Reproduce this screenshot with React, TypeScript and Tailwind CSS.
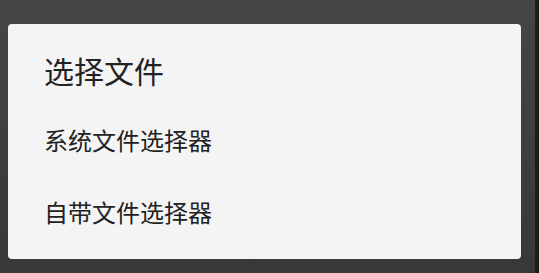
export default function App() {
  const font = { fontFamily: '"Noto Sans CJK SC", "Noto Sans", sans-serif' };
  return (
    <div className="flex h-[273px] w-[539px] overflow-hidden" style={font}>
      <div className="flex flex-1 flex-col bg-gradient-to-b from-[#454545] to-[#383838] pl-[8px] pr-[14px] pt-[24px]">
        <div className="flex h-[235px] flex-col rounded-[4px] bg-[#f4f4f4] pl-[36px] text-[#222222]">
          <div className="mt-[26px] h-[40px] text-[30px] leading-[40px]">选择文件</div>
          <div className="mt-[34px] h-[32px] text-[24px] leading-[32px]">系统文件选择器</div>
          <div className="mt-[40px] h-[32px] text-[24px] leading-[32px]">自带文件选择器</div>
        </div>
      </div>
      <div className="w-[4px] bg-[#1c1c1c]" />
    </div>
  );
}
